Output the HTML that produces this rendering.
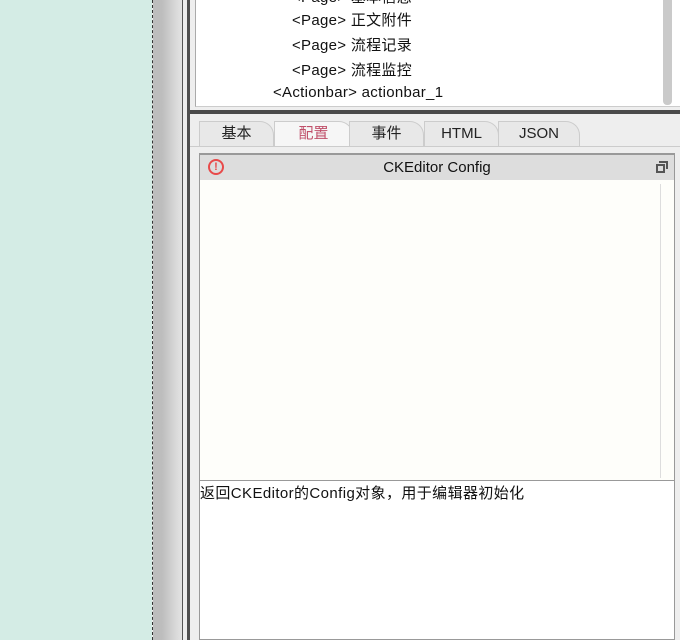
<!DOCTYPE html>
<html><head><meta charset="utf-8"><style>
*{margin:0;padding:0;box-sizing:border-box}
body{width:680px;height:640px;overflow:hidden;position:relative;background:#eee;font-family:"Liberation Sans","Noto Sans CJK SC",sans-serif;font-size:15px;color:#111}
.a{position:absolute}
.tree div{position:absolute;white-space:nowrap;font-size:15px;letter-spacing:0.3px}
.tab{position:absolute;top:121px;height:26px;border:1px solid #ccc;border-bottom:none;border-radius:0 14px 0 0;background:#e8e8e8;text-align:center;line-height:24px;font-size:15px;color:#222}
</style></head><body>
<div class="a" style="left:0;top:0;width:152px;height:640px;background:#d4ece5"></div>
<div class="a" style="left:152px;top:0;width:1px;height:640px;border-left:1px dashed #333"></div>
<div class="a" style="left:153px;top:0;width:29px;height:640px;background:linear-gradient(90deg,#bdbdbd 0,#bdbdbd 30%,#e4e4e4 100%)"></div>
<div class="a" style="left:182px;top:0;width:1px;height:640px;background:#555"></div>
<div class="a" style="left:183px;top:0;width:4px;height:640px;background:#eee"></div>
<div class="a" style="left:187px;top:0;width:3px;height:640px;background:#505050"></div>
<div class="a tree" style="left:195px;top:0;width:485px;height:107px;background:#fff;border-left:1px solid #aaa;border-bottom:1px solid #ccc">
<div style="left:96px;top:-14px">&lt;Page&gt; 基本信息</div>
<div style="left:96px;top:9px">&lt;Page&gt; 正文附件</div>
<div style="left:96px;top:34px">&lt;Page&gt; 流程记录</div>
<div style="left:96px;top:59px">&lt;Page&gt; 流程监控</div>
<div style="left:77px;top:84px">&lt;Actionbar&gt; actionbar_1</div>
</div>
<div class="a" style="left:663px;top:0;width:9px;height:105px;background:#cacaca;border-radius:0 0 4px 4px"></div>
<div class="a" style="left:190px;top:110px;width:490px;height:4px;background:#4a4a4a"></div>
<div class="tab" style="left:199px;width:75px">基本</div>
<div class="tab" style="left:274px;width:79px;background:#f6f6f6;color:#c0506a">配置</div>
<div class="tab" style="left:349px;width:75px">事件</div>
<div class="tab" style="left:424px;width:75px">HTML</div>
<div class="tab" style="left:498px;width:82px">JSON</div>
<div class="a" style="left:190px;top:146px;width:490px;height:1px;background:#ccc"></div>
<div class="a" style="left:199px;top:153px;width:476px;height:487px;border:1px solid #999;border-top:2px solid #999;background:#fff"></div>
<div class="a" style="left:200px;top:155px;width:474px;height:25px;background:#ddd;text-align:center;line-height:25px;font-size:15px">CKEditor Config</div>
<div class="a" style="left:208px;top:159px;width:16px;height:16px;border:2px solid #e84a4a;border-radius:50%;color:#e84a4a;font-size:11px;font-weight:bold;text-align:center;line-height:12px">!</div>
<div class="a" style="left:656px;top:164px;width:9px;height:9px;border:2px solid #555"></div>
<div class="a" style="left:659px;top:161px;width:9px;height:8px;border-top:2px solid #555;border-right:2px solid #555"></div>
<div class="a" style="left:200px;top:180px;width:474px;height:300px;background:#fefefa"></div>
<div class="a" style="left:660px;top:184px;width:1px;height:294px;background:#ddd"></div>
<div class="a" style="left:200px;top:480px;width:474px;height:1px;background:#999"></div>
<div class="a" style="left:200px;top:482px;font-size:15px;letter-spacing:0.4px;white-space:nowrap">返回CKEditor的Config对象，用于编辑器初始化</div>
</body></html>
